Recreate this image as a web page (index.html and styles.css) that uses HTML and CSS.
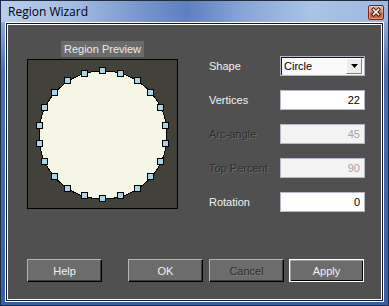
FILE: index.html
```html
<!DOCTYPE html>
<html lang="en">
<head>
    <meta charset="UTF-8">
    <title>Region Wizard</title>
    <link rel="stylesheet" href="styles.css">
</head>
<body>
    <div class="window">
        <div class="titlebar">
            <span class="title">Region Wizard</span>
            <span class="close">
                <svg width="16" height="15" viewBox="0 0 16 15">
                    <path d="M5.5 4.5 L10.5 9.5 M10.5 4.5 L5.5 9.5" stroke="#4a1a0c" stroke-width="3.4" stroke-linecap="square"/>
                    <path d="M5.5 4.5 L10.5 9.5 M10.5 4.5 L5.5 9.5" stroke="#fff" stroke-width="1.6" stroke-linecap="square"/>
                </svg>
            </span>
        </div>

        <div class="client">
            <div class="main">
                <div class="preview-col">
                    <div class="preview-label">Region Preview</div>
                    <div class="preview">
                        <!-- 22 vertices round the circle, one every 16.36 degrees -->
                        <svg width="149" height="148" viewBox="1 1 149 148">
                            <circle cx="76" cy="76" r="64" fill="#f6f6e7" stroke="#000" stroke-width="1" shape-rendering="crispEdges"/>
                            <g fill="#a9d3e7" stroke="#000" stroke-width="1" shape-rendering="crispEdges">
                                <rect x="72.5" y="8.5" width="6" height="6"/>
                                <rect x="90.5" y="11.5" width="6" height="6"/>
                                <rect x="107.5" y="18.5" width="6" height="6"/>
                                <rect x="120.5" y="30.5" width="6" height="6"/>
                                <rect x="130.5" y="45.5" width="6" height="6"/>
                                <rect x="135.5" y="63.5" width="6" height="6"/>
                                <rect x="135.5" y="81.5" width="6" height="6"/>
                                <rect x="130.5" y="99.5" width="6" height="6"/>
                                <rect x="120.5" y="114.5" width="6" height="6"/>
                                <rect x="107.5" y="126.5" width="6" height="6"/>
                                <rect x="90.5" y="133.5" width="6" height="6"/>
                                <rect x="72.5" y="136.5" width="6" height="6"/>
                                <rect x="54.5" y="133.5" width="6" height="6"/>
                                <rect x="37.5" y="126.5" width="6" height="6"/>
                                <rect x="24.5" y="114.5" width="6" height="6"/>
                                <rect x="14.5" y="99.5" width="6" height="6"/>
                                <rect x="9.5" y="81.5" width="6" height="6"/>
                                <rect x="9.5" y="63.5" width="6" height="6"/>
                                <rect x="14.5" y="45.5" width="6" height="6"/>
                                <rect x="24.5" y="30.5" width="6" height="6"/>
                                <rect x="37.5" y="18.5" width="6" height="6"/>
                                <rect x="54.5" y="11.5" width="6" height="6"/>
                            </g>
                        </svg>
                    </div>
                </div>

                <div class="fields">
                    <div class="field">
                        <label>Shape</label>
                        <div class="combo">
                            <span class="combo-text">Circle</span>
                            <span class="drop">
                                <svg width="7" height="4" viewBox="0 0 7 4"><path d="M0 0 H7 L3.5 4 Z" fill="#000"/></svg>
                            </span>
                        </div>
                    </div>
                    <div class="field">
                        <label for="vertices">Vertices</label>
                        <input type="text" id="vertices" value="22">
                    </div>
                    <div class="field disabled">
                        <label for="arc-angle">Arc-angle</label>
                        <input type="text" id="arc-angle" value="45" disabled>
                    </div>
                    <div class="field disabled">
                        <label for="top-percent">Top Percent</label>
                        <input type="text" id="top-percent" value="90" disabled>
                    </div>
                    <div class="field">
                        <label for="rotation">Rotation</label>
                        <input type="text" id="rotation" value="0">
                    </div>
                </div>
            </div>

            <div class="buttons">
                <button type="button">Help</button>
                <button type="button" class="btn-ok">OK</button>
                <button type="button" class="btn-cancel">Cancel</button>
                <button type="button" class="btn-apply">Apply</button>
            </div>
        </div>
    </div>
</body>
</html>
```

FILE: styles.css
```css
body {
    margin: 0;
    font-family: "Liberation Sans", Arial, sans-serif;
    font-size: 11px;
}

.window {
    width: 389px;
    height: 306px;
    box-sizing: border-box;
    border: 1px solid #1f2d45;
    display: flex;
    flex-direction: column;
    background: linear-gradient(180deg, #a8c0e6 0, #8eaadb 22px, #4a70b2 70px, #3560a6 100%);
}

.titlebar {
    height: 21px;
    display: flex;
    align-items: center;
    padding-left: 7px;
    background: linear-gradient(90deg, #b9cdea 0%, #a4bde4 18%, #7392cc 38%, #5d7fc2 48%, #86a4d8 62%, #aac3e6 80%, #9db7e0 100%);
}

.title {
    font-family: "Open Sans", "Noto Sans", sans-serif;
    font-size: 12px;
    color: #000;
    flex: 1;
}

.close {
    align-self: flex-start;
    margin-top: 4px;
    margin-right: 4px;
    width: 16px;
    height: 15px;
    box-sizing: border-box;
    border: 1px solid #6e2a18;
    border-radius: 2px;
    background: linear-gradient(180deg, #eeb29c 0%, #e08866 45%, #c94e28 55%, #d8683e 100%);
    box-shadow: inset 0 0 0 1px rgba(255, 220, 200, 0.45);
    position: relative;
}

.close svg {
    position: absolute;
    left: -1px;
    top: -1px;
}

.client {
    flex: 1;
    margin: 2px 6px 5px;
    border: 1px solid #fff;
    box-shadow: 0 0 0 1px #0f1826, 0 0 0 2px #fff;
    background: #505050;
    display: flex;
    flex-direction: column;
    padding: 16px 16px 17px 19px;
}

.main {
    display: flex;
}

.preview-col {
    width: 151px;
    display: flex;
    flex-direction: column;
    align-items: center;
}

.preview-label {
    width: 83px;
    height: 16px;
    line-height: 16px;
    background-color: #6b6b6b;
    color: #ececec;
    text-align: center;
    margin-bottom: 2px;
}

.preview {
    width: 149px;
    height: 148px;
    border: 1px solid #000;
    background-color: #42413a;
}

.preview svg {
    display: block;
}

.fields {
    flex: 1;
    margin-left: 31px;
    margin-top: 15px;
    display: flex;
    flex-direction: column;
    gap: 14px;
}

.field {
    display: flex;
    align-items: center;
    height: 20px;
}

.field label {
    flex: 1;
    color: #f2f2f2;
}

.field.disabled label {
    color: #2e2e2e;
    text-shadow: 1px 1px 0 #6c6c6c;
}

.field input {
    width: 85px;
    height: 20px;
    box-sizing: border-box;
    margin: 0;
    padding: 0 4px 0 2px;
    border: 1px solid #b6b6c6;
    background-color: #fff;
    color: #000;
    font-family: "Liberation Sans", Arial, sans-serif;
    font-size: 11px;
    text-align: right;
    outline: none;
}

.field input:disabled {
    background-color: #f3f3f3;
    color: #a3a3a3;
}

.combo {
    width: 85px;
    height: 20px;
    box-sizing: border-box;
    border: 1px solid #b6b6c6;
    box-shadow: inset 1px 1px 0 #1a1a1a;
    background-color: #fafafa;
    display: flex;
    align-items: center;
    padding: 0 2px 0 3px;
}

.combo-text {
    flex: 1;
    color: #000;
}

.drop {
    width: 16px;
    height: 16px;
    box-sizing: border-box;
    border: 1px solid;
    border-color: #fff #7c7c7c #7c7c7c #fff;
    background-color: #ededed;
    display: flex;
    align-items: center;
    justify-content: center;
}

.drop svg {
    display: block;
}

.buttons {
    margin-top: auto;
    display: flex;
}

button {
    width: 75px;
    height: 23px;
    box-sizing: border-box;
    padding: 0;
    border: 1px solid;
    border-color: #b4b4b4 #000 #000 #b4b4b4;
    box-shadow: inset -1px -1px 0 #3c3c3c;
    background-color: #6c6c6c;
    color: #f2f2f2;
    font-family: "Liberation Sans", Arial, sans-serif;
    font-size: 11px;
}

.btn-ok {
    margin-left: 26px;
}

.btn-cancel {
    margin-left: 6px;
    color: #2e2e2e;
    text-shadow: 1px 1px 0 #7c7c7c;
}

.btn-apply {
    margin-left: 5px;
    border-color: #fff;
    box-shadow: inset 1px 1px 0 #9c9c9c, inset -1px -1px 0 #000;
}
```
